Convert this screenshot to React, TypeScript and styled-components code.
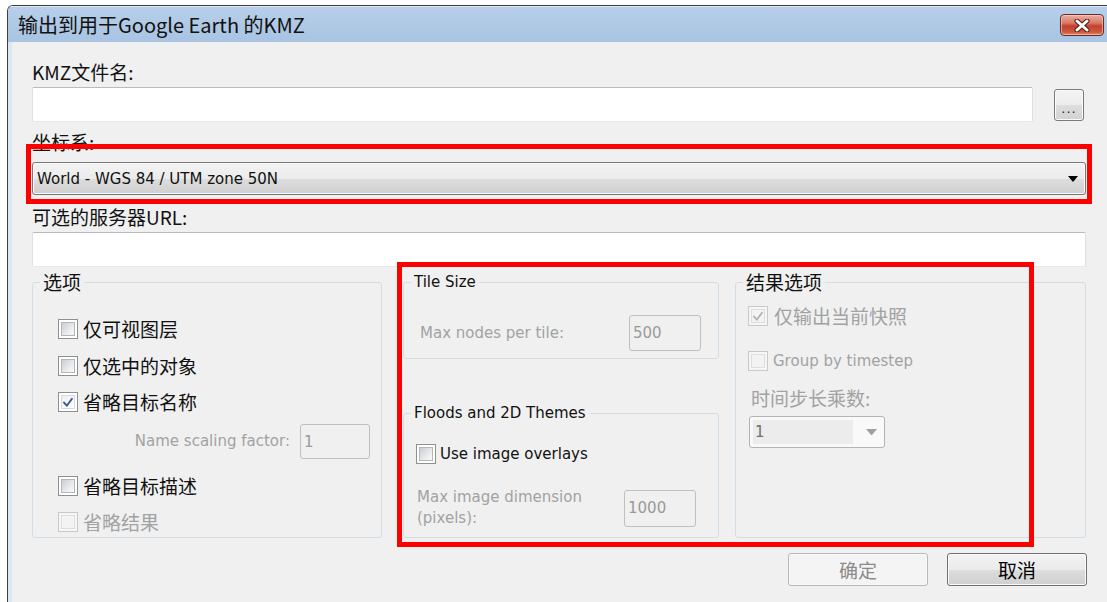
import React from "react";
import styled, { createGlobalStyle, css } from "styled-components";

const GlobalStyle = createGlobalStyle`
  html, body {
    margin: 0;
    padding: 0;
    background: #ffffff;
  }
  body {
    width: 1107px;
    height: 602px;
    overflow: hidden;
  }
`;

const zh = css`
  font-family: "Noto Sans CJK SC", "Noto Sans", sans-serif;
  font-size: 19px;
`;

const en = css`
  font-family: "DejaVu Sans", "Noto Sans CJK SC", sans-serif;
  font-size: 15px;
`;

type Lang = "zh" | "en";

const Desktop = styled.div`
  box-sizing: border-box;
  height: 602px;
  padding: 5px 0 0 7px;
`;

const Window = styled.div`
  position: relative;
  box-sizing: border-box;
  width: 1100px;
  height: 600px;
  display: flex;
  flex-direction: column;
  border-top: 1px solid #3e3e3e;
  border-left: 1px solid #3e3e3e;
  border-top-left-radius: 6px;
  overflow: hidden;
`;

const TitleBar = styled.div`
  flex: none;
  height: 36px;
  display: flex;
  align-items: flex-start;
  justify-content: space-between;
  padding: 0 3px 0 10px;
  background: linear-gradient(#b7cfe9, #a8c4e2);
  box-shadow: inset 0 1px 0 #dde8f4;
`;

const Title = styled.span`
  ${zh};
  font-size: 20px;
  line-height: 38px;
  color: #111;
`;

const CloseButton = styled.button`
  margin-top: 8px;
  width: 44px;
  height: 22px;
  padding: 0;
  display: flex;
  align-items: center;
  justify-content: center;
  border: 1px solid #6b2a21;
  border-radius: 4px;
  background: linear-gradient(
    #eab0a3 0%,
    #d87866 40%,
    #c2412c 55%,
    #cc5a3f 85%,
    #e08a66 100%
  );
  box-shadow: inset 0 0 0 1px rgba(255, 220, 210, 0.55);
`;

const Client = styled.div`
  flex: 1;
  display: flex;
  flex-direction: column;
  background: #f0f0f0;
  border-left: 4px solid #dde7f3;
  padding: 18px 21px 0 20px;
`;

const Label = styled.div<{ $mt?: number; $lang?: Lang; $muted?: boolean; $ml?: number }>`
  ${(p) => (p.$lang === "en" ? en : zh)};
  line-height: 24px;
  color: ${(p) => (p.$muted ? "#a2a2a2" : "#111")};
  margin-top: ${(p) => p.$mt ?? 0}px;
  margin-left: ${(p) => p.$ml ?? 0}px;
  white-space: nowrap;
`;

const FileRow = styled.div`
  display: flex;
  align-items: center;
  gap: 21px;
  margin-top: 3px;
`;

const TextBox = styled.div<{ $mt?: number }>`
  flex: 1;
  box-sizing: border-box;
  height: 35px;
  margin-top: ${(p) => p.$mt ?? 0}px;
  background: #ffffff;
  border: 1px solid;
  border-color: #b7bcc2 #dbdfe6 #e3e9ef #dbdfe6;
  border-radius: 2px;
`;

const BrowseButton = styled.button`
  flex: none;
  width: 30px;
  height: 32px;
  margin-right: 2px;
  padding: 0 0 4px;
  display: flex;
  align-items: flex-end;
  justify-content: center;
  ${en};
  font-size: 13px;
  letter-spacing: 1px;
  color: #222;
  border: 1px solid #7a7a7a;
  border-radius: 3px;
  background: linear-gradient(#f4f4f4 0%, #ececec 50%, #dedede 51%, #d2d2d2 100%);
  box-shadow: inset 0 0 0 1px #fbfbfb;
`;

const Combo = styled.div`
  box-sizing: border-box;
  height: 33px;
  margin-top: 8px;
  display: flex;
  align-items: center;
  justify-content: space-between;
  padding: 1px 7px 0 4px;
  ${en};
  line-height: 20px;
  color: #111;
  border: 1px solid #777;
  border-radius: 3px;
  background: linear-gradient(#f3f3f3 0%, #ebebeb 50%, #dddddd 51%, #cfcfcf 100%);
  box-shadow: inset 0 0 0 1px #f9f9f9;
`;

const GroupsRow = styled.div`
  display: flex;
  height: 266px;
  margin-top: 5px;
`;

const Group = styled.fieldset<{ $w?: number; $ml?: number; $mt?: number; $grow?: boolean }>`
  box-sizing: border-box;
  min-width: 0;
  margin: ${(p) => p.$mt ?? 0}px 0 0 ${(p) => p.$ml ?? 0}px;
  padding: 0;
  ${(p) => (p.$w ? `width: ${p.$w}px;` : "")}
  ${(p) => (p.$grow ? "flex: 1;" : "flex: none;")}
  display: flex;
  flex-direction: column;
  border: 1px solid #d3dde5;
  border-radius: 3px;
`;

const Legend = styled.legend<{ $lang: Lang }>`
  ${(p) => (p.$lang === "en" ? en : zh)};
  line-height: 20px;
  margin-left: 7px;
  padding: 0 3px;
  color: #111;
`;

const MiddleColumn = styled.div`
  width: 316px;
  margin-left: 21px;
  display: flex;
  flex-direction: column;
`;

const CheckRow = styled.div<{ $mt: number; $pl: number; $gap?: number }>`
  display: flex;
  align-items: center;
  gap: ${(p) => p.$gap ?? 5}px;
  height: 22px;
  margin-top: ${(p) => p.$mt}px;
  padding-left: ${(p) => p.$pl}px;
`;

const CheckText = styled.span<{ $lang: Lang; $muted?: boolean }>`
  ${(p) => (p.$lang === "en" ? en : zh)};
  line-height: 22px;
  color: ${(p) => (p.$muted ? "#a2a2a2" : "#111")};
  white-space: nowrap;
`;

const Box = styled.span<{ $disabled?: boolean }>`
  flex: none;
  box-sizing: border-box;
  width: 20px;
  height: 20px;
  display: flex;
  align-items: center;
  justify-content: center;
  border: 1px solid ${(p) => (p.$disabled ? "#c9c9c9" : "#8e8f8f")};
  background: ${(p) => (p.$disabled ? "#f6f6f6" : "#ffffff")};
`;

const BoxFill = styled.span<{ $disabled?: boolean; $checked?: boolean }>`
  box-sizing: border-box;
  width: 14px;
  height: 14px;
  display: flex;
  align-items: center;
  justify-content: center;
  border: 1px solid ${(p) => (p.$disabled ? "#dedede" : p.$checked ? "#d6d9dd" : "#b2b6bb")};
  background: ${(p) =>
    p.$disabled
      ? "#f3f3f3"
      : p.$checked
      ? "linear-gradient(135deg, #eceef0, #ffffff)"
      : "linear-gradient(135deg, #c9cdd2, #eef0f2 70%, #f8f8f8)"};
`;

const FieldRow = styled.div<{ $mt: number; $pl: number; $pr: number; $justify?: string; $h: number }>`
  display: flex;
  align-items: center;
  justify-content: ${(p) => p.$justify ?? "space-between"};
  gap: 10px;
  height: ${(p) => p.$h}px;
  margin-top: ${(p) => p.$mt}px;
  padding: 0 ${(p) => p.$pr}px 0 ${(p) => p.$pl}px;
`;

const FieldText = styled.span<{ $wrap?: boolean }>`
  ${en};
  line-height: 21px;
  color: #a2a2a2;
  ${(p) => (p.$wrap ? "max-width: 185px;" : "white-space: nowrap;")}
`;

const NumberBox = styled.div<{ $w: number; $h: number }>`
  flex: none;
  box-sizing: border-box;
  width: ${(p) => p.$w}px;
  height: ${(p) => p.$h}px;
  display: flex;
  align-items: center;
  padding-left: 3px;
  ${en};
  color: #9a9a9a;
  border: 1px solid #bfbfbf;
  border-radius: 3px;
  background: #f0f0f0;
`;

const SmallCombo = styled.div`
  box-sizing: border-box;
  width: 136px;
  height: 32px;
  margin: 6px 0 0 13px;
  display: flex;
  align-items: center;
  padding: 3px 7px 3px 3px;
  border: 1px solid #b3b3b3;
  border-radius: 3px;
  background: #f9f9f9;
`;

const SmallComboValue = styled.span`
  box-sizing: border-box;
  width: 100px;
  height: 100%;
  display: flex;
  align-items: center;
  padding-left: 2px;
  ${en};
  color: #6f6f6f;
  background: #ececec;
`;

const SmallComboArrow = styled.span`
  flex: 1;
  display: flex;
  justify-content: flex-end;
  align-items: center;
`;

const ButtonRow = styled.div`
  display: flex;
  justify-content: flex-end;
  gap: 19px;
  margin: 15px -1px 0 0;
`;

const DialogButton = styled.button<{ $disabled?: boolean }>`
  box-sizing: border-box;
  width: 140px;
  height: 33px;
  padding: 0;
  ${zh};
  line-height: 31px;
  color: ${(p) => (p.$disabled ? "#8a8a8a" : "#000")};
  border: 1px solid ${(p) => (p.$disabled ? "#b5b9bc" : "#707070")};
  border-radius: 3px;
  background: ${(p) =>
    p.$disabled
      ? "#f4f4f4"
      : "linear-gradient(#f3f3f3 0%, #ebebeb 50%, #dddddd 51%, #cfcfcf 100%)"};
  box-shadow: inset 0 0 0 1px ${(p) => (p.$disabled ? "#f8f8f8" : "#fafafa")};
`;

const Callout = styled.div<{ $x: number; $y: number; $w: number; $h: number }>`
  position: absolute;
  left: ${(p) => p.$x}px;
  top: ${(p) => p.$y}px;
  width: ${(p) => p.$w}px;
  height: ${(p) => p.$h}px;
  box-sizing: border-box;
  border: 5px solid #fd0000;
  pointer-events: none;
`;

const CheckMark = ({ color }: { color: string }) => (
  <svg width="13" height="13" viewBox="0 0 13 13">
    <path
      d="M2.2 6.6 L5.2 10 L10.8 2.4"
      fill="none"
      stroke={color}
      strokeWidth="2.1"
      strokeLinecap="round"
      strokeLinejoin="round"
    />
  </svg>
);

const CheckBox = ({ checked, disabled }: { checked?: boolean; disabled?: boolean }) => (
  <Box $disabled={disabled}>
    <BoxFill $disabled={disabled} $checked={checked}>
      {checked && <CheckMark color={disabled ? "#b4b4b4" : "#3a5796"} />}
    </BoxFill>
  </Box>
);

const CloseGlyph = () => (
  <svg width="18" height="13" viewBox="0 0 18 13">
    <path d="M4 2 L14 11 M14 2 L4 11" stroke="#4f1a12" strokeWidth="5" strokeLinecap="round" />
    <path d="M4 2 L14 11 M14 2 L4 11" stroke="#ffffff" strokeWidth="3" strokeLinecap="round" />
  </svg>
);

const DropArrow = ({ color, w }: { color: string; w: number }) => (
  <svg width={w} height={w * 0.6} viewBox="0 0 10 6">
    <path d="M0 0 H10 L5 6 Z" fill={color} />
  </svg>
);

export default function App() {
  return (
    <>
      <GlobalStyle />
      <Desktop>
        <Window>
          <TitleBar>
            <Title>输出到用于Google Earth 的KMZ</Title>
            <CloseButton aria-label="关闭">
              <CloseGlyph />
            </CloseButton>
          </TitleBar>

          <Client>
            <Label>KMZ文件名:</Label>
            <FileRow>
              <TextBox />
              <BrowseButton>...</BrowseButton>
            </FileRow>

            <Label $mt={8}>坐标系:</Label>
            <Combo>
              <span>World - WGS 84 / UTM zone 50N</span>
              <DropArrow color="#000" w={10} />
            </Combo>

            <Label $mt={10}>可选的服务器URL:</Label>
            <TextBox $mt={3} style={{ flex: "none" }} />

            <GroupsRow>
              <Group $w={350}>
                <Legend $lang="zh">选项</Legend>
                <CheckRow $mt={26} $pl={25}>
                  <CheckBox />
                  <CheckText $lang="zh">仅可视图层</CheckText>
                </CheckRow>
                <CheckRow $mt={15} $pl={25}>
                  <CheckBox />
                  <CheckText $lang="zh">仅选中的对象</CheckText>
                </CheckRow>
                <CheckRow $mt={14} $pl={25}>
                  <CheckBox checked />
                  <CheckText $lang="zh">省略目标名称</CheckText>
                </CheckRow>
                <FieldRow $mt={11} $h={35} $pl={0} $pr={11} $justify="flex-end">
                  <FieldText>Name scaling factor:</FieldText>
                  <NumberBox $w={70} $h={35}>1</NumberBox>
                </FieldRow>
                <CheckRow $mt={16} $pl={25}>
                  <CheckBox />
                  <CheckText $lang="zh">省略目标描述</CheckText>
                </CheckRow>
                <CheckRow $mt={14} $pl={25}>
                  <CheckBox disabled />
                  <CheckText $lang="zh" $muted>
                    省略结果
                  </CheckText>
                </CheckRow>
              </Group>

              <MiddleColumn>
                <Group>
                  <Legend $lang="en">Tile Size</Legend>
                  <FieldRow $mt={23} $h={36} $pl={16} $pr={17}>
                    <FieldText>Max nodes per tile:</FieldText>
                    <NumberBox $w={72} $h={36}>500</NumberBox>
                  </FieldRow>
                  <div style={{ height: 7 }} />
                </Group>
                <Group $mt={44} $grow>
                  <Legend $lang="en">Floods and 2D Themes</Legend>
                  <CheckRow $mt={20} $pl={12} $gap={4}>
                    <CheckBox />
                    <CheckText $lang="en">Use image overlays</CheckText>
                  </CheckRow>
                  <FieldRow $mt={21} $h={44} $pl={13} $pr={22}>
                    <FieldText $wrap>Max image dimension (pixels):</FieldText>
                    <NumberBox $w={72} $h={37}>1000</NumberBox>
                  </FieldRow>
                </Group>
              </MiddleColumn>

              <Group $ml={16} $grow>
                <Legend $lang="zh">结果选项</Legend>
                <CheckRow $mt={13} $pl={12} $gap={6}>
                  <CheckBox checked disabled />
                  <CheckText $lang="zh" $muted>
                    仅输出当前快照
                  </CheckText>
                </CheckRow>
                <CheckRow $mt={23} $pl={12} $gap={5}>
                  <CheckBox disabled />
                  <CheckText $lang="en" $muted>
                    Group by timestep
                  </CheckText>
                </CheckRow>
                <Label $mt={14} $ml={15} $muted>
                  时间步长乘数:
                </Label>
                <SmallCombo>
                  <SmallComboValue>1</SmallComboValue>
                  <SmallComboArrow>
                    <DropArrow color="#a0a0a0" w={11} />
                  </SmallComboArrow>
                </SmallCombo>
              </Group>
            </GroupsRow>

            <ButtonRow>
              <DialogButton $disabled>确定</DialogButton>
              <DialogButton>取消</DialogButton>
            </ButtonRow>
          </Client>

          <Callout $x={18} $y={138} $w={1066} $h={60} />
          <Callout $x={389} $y={256} $w={637} $h={285} />
        </Window>
      </Desktop>
    </>
  );
}
